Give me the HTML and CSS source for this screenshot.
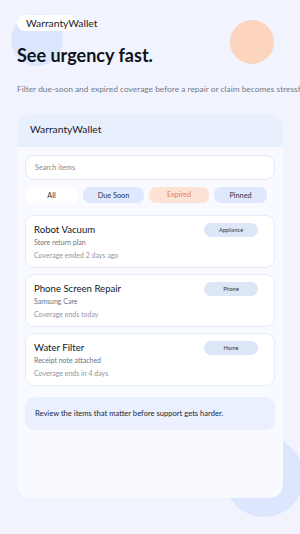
FILE: index.html
```html
<!DOCTYPE html>
<html lang="en">
<head>
  <meta charset="UTF-8">
  <meta name="viewport" content="width=device-width, initial-scale=1.0">
  <title>WarrantyWallet</title>
  <link rel="stylesheet" href="styles.css">
</head>
<body>
  <div class="blob blob-blue"></div>
  <div class="blob blob-peach"></div>
  <div class="blob blob-bottom"></div>

  <header class="hero">
    <div class="brand">WarrantyWallet</div>
    <h1>See urgency fast.</h1>
    <p class="lead">Filter due-soon and expired coverage before a repair or claim becomes stressful.</p>
  </header>

  <main class="panel">
    <div class="panel-head">WarrantyWallet</div>

    <div class="panel-body">
      <div class="search">Search items</div>

      <div class="filters">
        <span class="chip chip-all">All</span>
        <span class="chip">Due Soon</span>
        <span class="chip chip-expired">Expired</span>
        <span class="chip">Pinned</span>
      </div>

      <div class="items">
        <div class="item">
          <div class="item-text">
            <div class="item-title">Robot Vacuum</div>
            <div class="item-sub">Store return plan</div>
            <div class="item-meta">Coverage ended 2 days ago</div>
          </div>
          <span class="tag">Appliance</span>
        </div>

        <div class="item">
          <div class="item-text">
            <div class="item-title">Phone Screen Repair</div>
            <div class="item-sub">Samsung Care</div>
            <div class="item-meta">Coverage ends today</div>
          </div>
          <span class="tag">Phone</span>
        </div>

        <div class="item">
          <div class="item-text">
            <div class="item-title">Water Filter</div>
            <div class="item-sub">Receipt note attached</div>
            <div class="item-meta">Coverage ends in 4 days</div>
          </div>
          <span class="tag">Home</span>
        </div>
      </div>

      <div class="note">Review the items that matter before support gets harder.</div>
    </div>
  </main>
</body>
</html>
```

FILE: styles.css
```css
body {
  font-family: Lato, "Noto Sans", sans-serif;
  margin: 0;
  padding: 0;
  width: 300px;
  height: 534px;
  overflow: hidden;
  position: relative;
  background-color: #f1f4fe;
  color: #14171f;
}

/* decorative circles */
.blob {
  position: absolute;
  border-radius: 50%;
  z-index: 0;
}

.blob-blue {
  left: 11px;
  top: 14px;
  width: 52px;
  height: 52px;
  background-color: #dbe6fd;
}

.blob-peach {
  left: 230px;
  top: 20px;
  width: 44px;
  height: 44px;
  background-color: #fdd4bd;
}

.blob-bottom {
  left: 224px;
  top: 437px;
  width: 80px;
  height: 80px;
  background-color: #dce7fd;
}

.hero {
  position: relative;
  z-index: 1;
  padding: 15px 17px 0;
  overflow: hidden;
}

.brand {
  width: 60px;
  height: 16px;
  line-height: 16px;
  padding-left: 9px;
  box-sizing: border-box;
  background-color: white;
  border-radius: 8px;
  font-size: 10.3px;
  white-space: nowrap;
  color: #1c2030;
}

h1 {
  margin: 13px 0 0;
  font-size: 18px;
  line-height: 22px;
  font-weight: 700;
  color: #10131b;
}

.lead {
  margin: 17px 0 0;
  font-size: 8.4px;
  line-height: 12px;
  white-space: nowrap;
  color: #737a89;
}

.panel {
  position: relative;
  z-index: 1;
  margin: 19px 17px 0;
  height: 384px;
  border-radius: 14px;
  background-color: #f8faff;
  overflow: hidden;
}

.panel-head {
  height: 33px;
  line-height: 30px;
  padding: 0 13px;
  background-color: #e8effd;
  font-size: 10.3px;
  color: #1c2030;
}

.panel-body {
  padding: 8px;
}

.search {
  height: 25px;
  line-height: 24px;
  padding: 0 9px;
  box-sizing: border-box;
  background-color: white;
  border: 1px solid #e2e8f6;
  border-radius: 9px;
  font-size: 7.2px;
  color: #858b98;
}

.filters {
  display: grid;
  grid-template-columns: 53fr 61fr 60fr 53fr;
  gap: 5px;
  margin-top: 7px;
  padding-right: 8px;
}

.chip {
  height: 16px;
  line-height: 17px;
  border-radius: 7px;
  text-align: center;
  font-size: 7.3px;
  background-color: #dfe8fc;
  color: #2c3347;
}

.chip-all {
  background-color: white;
}

.chip-expired {
  background-color: #fde3d6;
  color: #ec7c4b;
  line-height: 15px;
}

.items {
  display: flex;
  flex-direction: column;
  gap: 6px;
  margin-top: 12px;
}

.item {
  display: flex;
  justify-content: space-between;
  align-items: flex-start;
  height: 53px;
  padding: 8px 16px 0 8px;
  box-sizing: border-box;
  background-color: white;
  border: 1px solid #e5ebf8;
  border-radius: 9px;
}

.item-title {
  font-size: 9.6px;
  line-height: 12px;
  color: #14171f;
}

.item-sub {
  margin-top: 1px;
  font-size: 7px;
  line-height: 11px;
  color: #6c7384;
}

.item-meta {
  margin-top: 2px;
  font-size: 7px;
  line-height: 11px;
  color: #8f95a2;
}

.tag {
  width: 54px;
  height: 14px;
  line-height: 14px;
  margin-top: -1px;
  border-radius: 7px;
  text-align: center;
  font-size: 5.6px;
  background-color: #dde6f7;
  color: #2f3648;
}

.note {
  margin-top: 11px;
  height: 33px;
  line-height: 33px;
  padding: 0 10px;
  border-radius: 9px;
  background-color: #eaf0fd;
  font-size: 7.6px;
  color: #23283a;
}
```
